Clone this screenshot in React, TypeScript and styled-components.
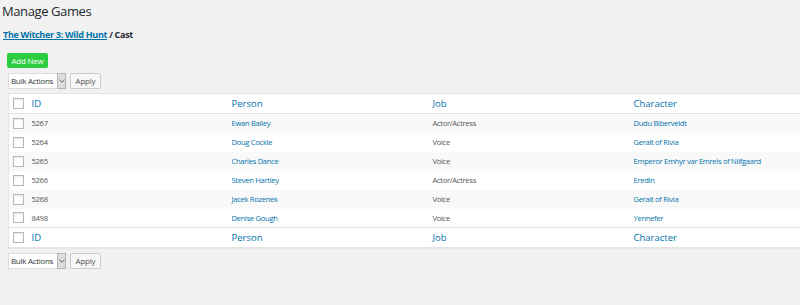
import React from "react";
import styled, { createGlobalStyle } from "styled-components";

const Global = createGlobalStyle`
  html, body { margin: 0; padding: 0; background: #f1f1f1; }
  body { font-family: "Open Sans", "Noto Sans", sans-serif; color: #23282d; overflow: hidden; }
`;

const Page = styled.div`
  width: 800px;
  height: 305px;
  overflow: hidden;
`;

const Title = styled.h1`
  margin: 0;
  padding: 1px 0 0 2px;
  font-size: 13px;
  font-weight: 400;
  line-height: 20px;
  letter-spacing: -0.4px;
  color: #23282d;
`;

const Crumbs = styled.div`
  margin-top: 7px;
  padding-left: 3px;
  font-size: 9px;
  font-weight: 700;
  line-height: 14px;
  letter-spacing: -0.3px;
  color: #23282d;
`;

const CrumbLink = styled.a`
  color: #0073aa;
  text-decoration: underline;
`;

const AddNew = styled.button`
  display: block;
  margin: 11px 0 0 7px;
  height: 15px;
  width: 41px;
  padding: 0;
  border: 0;
  border-radius: 2px;
  background: #2ecc40;
  color: #fff;
  font-family: inherit;
  font-size: 8px;
  letter-spacing: -0.2px;
  line-height: 15px;
  text-align: center;
`;

const Bar = styled.div<{ $top: number }>`
  display: flex;
  align-items: center;
  gap: 4px;
  padding-left: 8px;
  margin-top: ${(p) => p.$top}px;
  height: 16px;
`;

const Select = styled.div`
  display: flex;
  height: 16px;
  width: 58px;
  box-sizing: border-box;
  background: #fff;
  border: 1px solid #ddd;
  border-right: 0;
  font-size: 8px;
  letter-spacing: -0.3px;
  color: #32373c;
`;

const SelectLabel = styled.span`
  flex: 1;
  padding-left: 2px;
  line-height: 14px;
  white-space: nowrap;
  overflow: hidden;
`;

const Arrow = styled.span`
  width: 9px;
  background: #ddd;
  border: 1px solid #b4b4b4;
  box-sizing: border-box;
  display: flex;
  align-items: center;
  justify-content: center;
  margin-top: -1px;
  height: 16px;
`;

const Apply = styled.button`
  height: 16px;
  width: 31px;
  padding: 0;
  box-sizing: border-box;
  border: 1px solid #ccc;
  border-radius: 2px;
  background: #f7f7f7;
  color: #555;
  font-family: inherit;
  font-size: 8px;
  letter-spacing: -0.2px;
  line-height: 14px;
`;

const Table = styled.table`
  margin: 4px 0 0 8px;
  width: 792px;
  border-collapse: collapse;
  table-layout: fixed;
  background: #fff;
  box-shadow: 0 1px 1px rgba(0,0,0,0.04);
  border: 1px solid #e5e5e5;
  border-right: 0;
`;

const HeadRow = styled.tr<{ $foot?: boolean }>`
  height: 20px;
  background: #fff;
  border-bottom: ${(p) => (p.$foot ? "0" : "1px solid #e1e1e1")};
  border-top: ${(p) => (p.$foot ? "1px solid #e1e1e1" : "0")};
`;

const Row = styled.tr<{ $odd: boolean }>`
  height: 19px;
  background: ${(p) => (p.$odd ? "#f9f9f9" : "#fff")};
`;

const Th = styled.th`
  text-align: left;
  font-weight: 400;
  font-size: 9.5px;
  color: #0073aa;
  padding: 0 0 0 4px;
  white-space: nowrap;
`;

const Td = styled.td<{ $link?: boolean }>`
  font-size: 7.6px;
  letter-spacing: -0.3px;
  color: ${(p) => (p.$link ? "#0073aa" : "#555")};
  padding: 0 0 0 4px;
  white-space: nowrap;
`;

const CheckCell = styled.td`
  padding: 0 0 0 4px;
`;

const Box = styled.span`
  display: block;
  width: 9px;
  height: 9px;
  border: 1px solid #b4b9be;
  background: #fff;
  box-shadow: inset 0 1px 2px rgba(0,0,0,0.1);
`;

const rows = [
  ["5267", "Ewan Bailey", "Actor/Actress", "Dudu Biberveldt"],
  ["5264", "Doug Cockle", "Voice", "Geralt of Rivia"],
  ["5265", "Charles Dance", "Voice", "Emperor Emhyr var Emreis of Nilfgaard"],
  ["5266", "Steven Hartley", "Actor/Actress", "Eredin"],
  ["5268", "Jacek Rozenek", "Voice", "Geralt of Rivia"],
  ["8498", "Denise Gough", "Voice", "Yennefer"],
];

const Chevron = () => (
  <svg width="6" height="4" viewBox="0 0 6 4">
    <path d="M0.5 0.8 L3 3.2 L5.5 0.8" stroke="#555" strokeWidth="0.9" fill="none" />
  </svg>
);

const Actions = ({ top }: { top: number }) => (
  <Bar $top={top}>
    <Select>
      <SelectLabel>Bulk Actions</SelectLabel>
      <Arrow><Chevron /></Arrow>
    </Select>
    <Apply>Apply</Apply>
  </Bar>
);

const Header = ({ foot }: { foot?: boolean }) => (
  <HeadRow $foot={foot}>
    <CheckCell><Box /></CheckCell>
    <Th>ID</Th>
    <Th>Person</Th>
    <Th>Job</Th>
    <Th>Character</Th>
  </HeadRow>
);

export default function App() {
  return (
    <Page>
      <Global />
      <Title>Manage Games</Title>
      <Crumbs>
        <CrumbLink href="#">The Witcher 3: Wild Hunt</CrumbLink> / Cast
      </Crumbs>
      <AddNew>Add New</AddNew>
      <Actions top={5} />
      <Table>
        <colgroup>
          <col style={{ width: 19 }} />
          <col style={{ width: 200 }} />
          <col style={{ width: 201 }} />
          <col style={{ width: 201 }} />
          <col />
        </colgroup>
        <thead>
          <Header />
        </thead>
        <tbody>
          {rows.map((r, i) => (
            <Row key={r[0]} $odd={i % 2 === 0}>
              <CheckCell><Box /></CheckCell>
              <Td>{r[0]}</Td>
              <Td $link>{r[1]}</Td>
              <Td>{r[2]}</Td>
              <Td $link>{r[3]}</Td>
            </Row>
          ))}
        </tbody>
        <tfoot>
          <Header foot />
        </tfoot>
      </Table>
      <Actions top={5} />
    </Page>
  );
}
